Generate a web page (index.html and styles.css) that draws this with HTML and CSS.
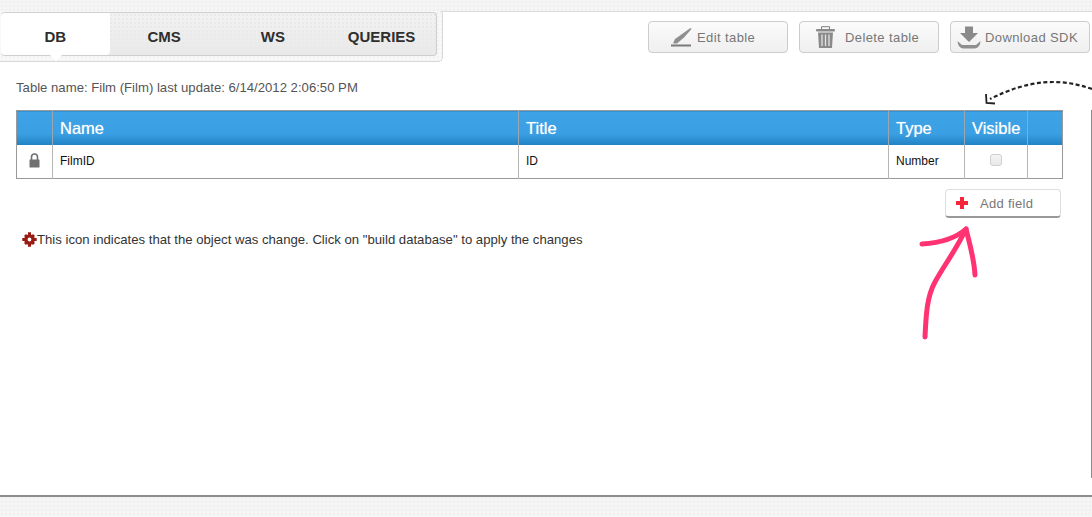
FILE: index.html
```html
<!DOCTYPE html>
<html lang="en">
<head>
    <meta charset="UTF-8">
    <title>Table Film</title>
    <link rel="stylesheet" href="styles.css">
</head>
<body>
    <div class="panel">
        <div class="topbar">
            <div class="tabs-wrap">
                <nav class="tabs">
                    <a href="#" class="tab active">DB</a>
                    <a href="#" class="tab">CMS</a>
                    <a href="#" class="tab">WS</a>
                    <a href="#" class="tab">QUERIES</a>
                </nav>
            </div>
            <div class="actions">
                <a href="#" class="btn btn-edit">
                    <svg width="21" height="19" viewBox="0 0 21 19">
                        <path d="M2 15.5 L4 11 L19.5 0 L20.5 1 L13 9.5 L6 15.5 Z" fill="#8f8f8f"/>
                        <path d="M0 17.5 H20" stroke="#7a7a7a" stroke-width="2"/>
                    </svg>
                    Edit table
                </a>
                <a href="#" class="btn btn-delete">
                    <svg width="19" height="22" viewBox="0 0 19 22">
                        <path d="M5.5 3 V0.7 H13.5 V3" fill="none" stroke="#808080"/>
                        <rect x="0" y="3" width="19" height="2.6" rx="1" fill="#8a8a8a"/>
                        <path d="M2 6.5 H17 L16 22 H3 Z" fill="#8a8a8a"/>
                        <path d="M6 8.5 V20 M9.5 8.5 V20 M13 8.5 V20" stroke="#e4e4e4" stroke-width="1.3"/>
                    </svg>
                    Delete table
                </a>
                <a href="#" class="btn btn-sdk">
                    <svg width="24" height="23" viewBox="0 0 24 23">
                        <path d="M8 0.5 H16 V7 H21 L12 16 L3 7 H8 Z" fill="#8a8a8a"/>
                        <path d="M0.5 15 Q1 22 6 22.5 H18 Q23 22 23.5 15 L19 19 H5 Z" fill="#8f8f8f"/>
                    </svg>
                    Download SDK
                </a>
            </div>
        </div>

        <div class="content">
            <p class="table-info">Table name: Film (Film) last update: 6/14/2012 2:06:50 PM</p>

            <table class="fields">
                <colgroup>
                    <col class="c-lock"><col class="c-name"><col class="c-title"><col class="c-type"><col class="c-visible"><col>
                </colgroup>
                <thead>
                    <tr>
                        <th></th>
                        <th>Name</th>
                        <th>Title</th>
                        <th>Type</th>
                        <th>Visible</th>
                        <th></th>
                    </tr>
                </thead>
                <tbody>
                    <tr>
                        <td class="lock-cell">
                            <svg width="11" height="15" viewBox="0 0 11 15">
                                <path d="M2.5 7 V4 a3 3 0 0 1 6 0 V7" fill="none" stroke="#707070" stroke-width="1.6"/>
                                <rect x="0.5" y="6.5" width="10" height="8" rx="0.5" fill="#707070"/>
                            </svg>
                        </td>
                        <td>FilmID</td>
                        <td>ID</td>
                        <td>Number</td>
                        <td class="check-cell"><span class="check"></span></td>
                        <td></td>
                    </tr>
                </tbody>
            </table>

            <div class="add-row">
                <a href="#" class="btn-add"><span class="plus"></span>Add field</a>
            </div>

            <p class="legend">
                <svg width="15" height="15" viewBox="0 0 15 15">
                    <circle cx="7.5" cy="7.5" r="3.6" fill="none" stroke="#991c14" stroke-width="3.4"/>
                    <path d="M6 0.3 H9 V3 H6 Z M6 12 H9 V14.7 H6 Z M0.3 6 H3 V9 H0.3 Z M12 6 H14.7 V9 H12 Z" fill="#991c14"/>
                    <path d="M2 4 L4 2 L5.5 3.5 L3.5 5.5 Z M13 4 L11 2 L9.5 3.5 L11.5 5.5 Z M2 11 L4 13 L5.5 11.5 L3.5 9.5 Z M13 11 L11 13 L9.5 11.5 L11.5 9.5 Z" fill="#991c14"/>
                </svg>This icon indicates that the object was change. Click on "build database" to apply the changes
            </p>
        </div>

        <div class="side-line"></div>
    </div>

    <!-- hand drawn notes on the screenshot -->
    <svg class="notes" width="1092" height="517" viewBox="0 0 1092 517">
        <path d="M1092 89 C1060 78 1030 79 990 99" fill="none" stroke="#222" stroke-width="2.2" stroke-dasharray="4 2.5"/>
        <path d="M986 94 L986.5 103 L995 103.5" fill="none" stroke="#222" stroke-width="1.8"/>
        <g fill="none" stroke="#ff3372" stroke-width="5" stroke-linecap="round" stroke-linejoin="round">
            <path d="M925 337 C926 315 927 296 935 282 C943 267 956 250 966 229"/>
            <path d="M922 244 C938 243 955 239 966 229 C970 245 974 258 975 275"/>
        </g>
    </svg>
</body>
</html>
```
FILE: styles.css
```css
* {
    box-sizing: border-box;
    margin: 0;
    padding: 0;
}
html, body {
    height: 517px;
    overflow: hidden;
}
body {
    position: relative;
    padding-top: 11px;
    font-family: "Liberation Sans", Arial, sans-serif;
    background-color: #f5f5f5;
    background-image: radial-gradient(#efefef 1px, transparent 1.5px);
    background-size: 4px 4px;
}
a {
    text-decoration: none;
}

.panel {
    position: relative;
    height: 486px;
    background: #fff;
    border-top: 1px solid #dcdcdc;
    border-bottom: 2px solid #8c8c8c;
}
.topbar {
    display: flex;
    justify-content: space-between;
    height: 50px;
}

/* tabs */
.tabs-wrap {
    position: relative;
    top: -1px;
    width: 443px;
    height: 51px;
    padding: 1px 5px 6px 1px;
    background-color: #f8f8f8;
    background-image: radial-gradient(#f1f1f1 1px, transparent 1.5px);
    background-size: 4px 4px;
    border: 1px solid #d8d8d8;
    border-top: 0;
    border-left: 0;
    border-radius: 0 4px 5px 0;
}
.tabs {
    display: flex;
    height: 44px;
    border: 1px solid #cfcfcf;
    border-left: 0;
    border-radius: 4px;
    background-color: #efefef;
    background-image: radial-gradient(#e9e9e9 1px, transparent 1.5px), linear-gradient(#f2f2f2, #e9e9e9);
    background-size: 4px 4px, 100% 100%;
}
.tab {
    flex: 1;
    font-size: 15px;
    font-weight: bold;
    line-height: 47px;
    text-align: center;
    color: #2e2e2e;
}
.tab.active {
    position: relative;
    background: #fff;
    border-radius: 4px 0 4px 4px;
}
.tab.active::after {
    content: "";
    position: absolute;
    left: 49px;
    top: 100%;
    border: 6px solid transparent;
    border-top-color: #fff;
}

/* top buttons */
.actions {
    display: flex;
    gap: 11px;
    padding: 9px 2px 0 0;
}
.btn {
    display: flex;
    align-items: center;
    width: 140px;
    height: 32px;
    font-size: 13px;
    letter-spacing: 0.4px;
    color: #777;
    border: 1px solid #ccc;
    border-radius: 4px;
    background: linear-gradient(#fbfbfb, #efefef);
}
.btn-edit {
    gap: 5px;
    padding-left: 22px;
}
.btn-delete {
    gap: 10px;
    padding-left: 16px;
}
.btn-sdk {
    gap: 4px;
    padding-left: 6px;
}

/* table area */
.content {
    padding: 0 29px 0 16px;
}
.table-info {
    margin-top: 18px;
    font-size: 13.15px;
    line-height: 15px;
    color: #555;
}
.fields {
    width: 1047px;
    margin-top: 15px;
    table-layout: fixed;
    border-collapse: collapse;
    border: 1px solid #999;
}
.c-lock { width: 36px; }
.c-name { width: 466px; }
.c-title { width: 370px; }
.c-type { width: 76px; }
.c-visible { width: 63px; }
.fields th {
    height: 34px;
    padding: 1px 7px 0;
    font-size: 16.5px;
    font-weight: normal;
    text-align: left;
    color: #fff;
    text-shadow: 0 0 1px rgba(255, 255, 255, 0.6);
    background: linear-gradient(#3ea3e6 0%, #3ba0e3 65%, #1f82c4 100%);
    border-left: 1px solid #9aa7b0;
}
.fields th:first-child {
    border-left: 0;
}
.fields td {
    height: 34px;
    padding: 0 7px;
    font-size: 12px;
    color: #111;
    border-left: 1px solid #b5b5b5;
}
.fields td:first-child {
    border-left: 0;
}
.lock-cell {
    text-align: center;
}
.lock-cell svg {
    display: block;
    margin: -2px auto 0;
}
.check-cell {
    text-align: center;
}
.check {
    display: block;
    width: 12px;
    height: 12px;
    margin: -3px auto 0;
    border: 1px solid #cfcfcf;
    border-radius: 3px;
    background: linear-gradient(#f5f5f5, #e8e8e8);
}

.add-row {
    display: flex;
    justify-content: flex-end;
    padding: 10px 2px 0 0;
}
.btn-add {
    display: flex;
    align-items: center;
    width: 116px;
    height: 29px;
    padding-left: 10px;
    font-size: 13px;
    letter-spacing: 0.3px;
    color: #777;
    border: 1px solid #ddd;
    border-bottom: 2px solid #999;
    border-radius: 4px;
    background: #fff;
}
.plus {
    width: 12px;
    height: 12px;
    margin-right: 12px;
    background:
        linear-gradient(#f5263c, #f5263c) center / 12px 4px no-repeat,
        linear-gradient(#f5263c, #f5263c) center / 4px 12px no-repeat;
}
.legend {
    display: flex;
    align-items: center;
    margin: 14px 0 0 6px;
    font-size: 13.15px;
    line-height: 15px;
    color: #333;
}
.side-line {
    position: absolute;
    right: 0;
    top: 98px;
    width: 1px;
    height: 368px;
    background: #8c8c8c;
}
.notes {
    position: absolute;
    left: 0;
    top: 0;
    pointer-events: none;
}
```
